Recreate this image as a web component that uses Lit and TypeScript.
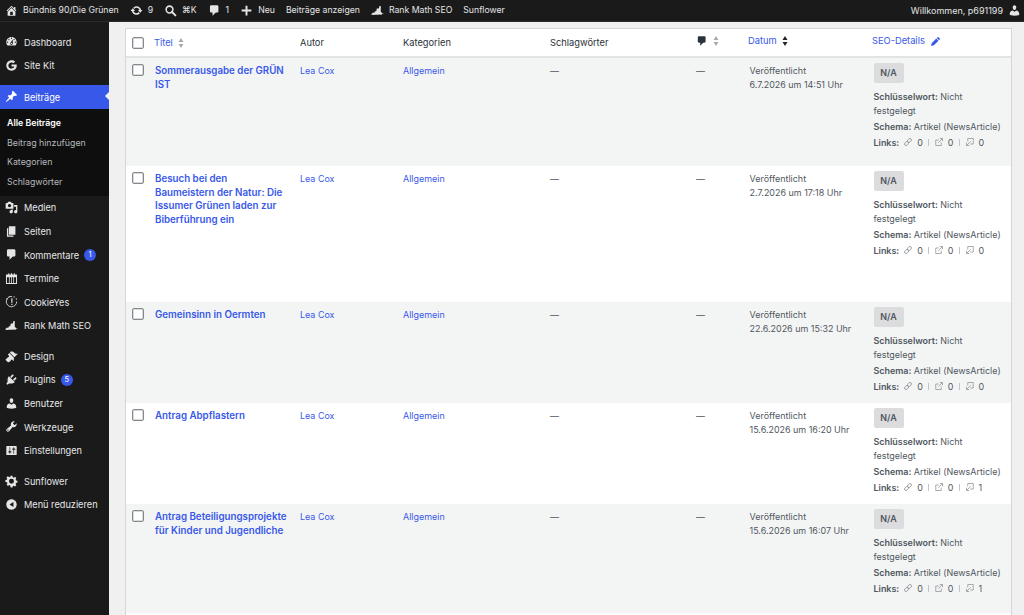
import { LitElement, html, css, svg } from "lit";
import { customElement } from "lit/decorators.js";

const ICONS: Record<string, unknown> = {
  home: svg`<path d="M16 8.5l1.53 1.53-1.06 1.06L10 4.62l-6.47 6.47-1.06-1.06L10 2.5l4 4v-2h2v4zm-6-2.46l6 5.99V18H4v-5.97zM12 17v-5H8v5h4z"/>`,
  update: svg`<path d="M10.2 3.28c3.53 0 6.43 2.61 6.92 6h2.08l-3.5 4-3.5-4h2.32c-.45-1.97-2.21-3.45-4.32-3.45-1.45 0-2.73.71-3.54 1.78L4.95 5.66C6.23 4.2 8.11 3.28 10.2 3.28zm-.4 13.44c-3.52 0-6.43-2.61-6.92-6H.8l3.5-4c1.17 1.33 2.33 2.67 3.5 4H5.48c.45 1.97 2.21 3.45 4.32 3.45 1.45 0 2.73-.71 3.54-1.78l1.71 1.95c-1.28 1.46-3.15 2.38-5.25 2.38z"/>`,
  search: svg`<circle cx="8.5" cy="8.5" r="5.2" fill="none" stroke="currentColor" stroke-width="2.4"/><path d="M12 12l5.500 5.500" stroke="currentColor" stroke-width="3" stroke-linecap="round"/>`,
  comment: svg`<path d="M5 2h9c1.1 0 2 .9 2 2v7c0 1.1-.9 2-2 2h-2l-5 5v-5H5c-1.1 0-2-.9-2-2V4c0-1.1.9-2 2-2z"/>`,
  plus: svg`<path d="M17.500 8.500v3h-6v6h-3v-6h-6v-3h6v-6h3v6z"/>`,
  rank: svg`<path d="M0 16l3-3 2 1 1-3h2l1-4h3l1-4h2v9l2 2h3l-3 1v1l-2 .500-2-.500-2 .500H6l-2 .500z"/>`,
  user: svg`<path d="M10 9.250c-2.270 0-2.730-3.440-2.730-3.440C7 4.020 7.820 2 9.970 2c2.160 0 2.980 2.020 2.710 3.810 0 0-.41 3.440-2.680 3.440zm0 2.570L12.720 10c2.390 0 4.520 2.330 4.520 4.530v2.490s-3.650 1.130-7.240 1.130c-3.650 0-7.240-1.130-7.240-1.130v-2.490c0-2.250 1.940-4.480 4.470-4.480z"/>`,
  dashboard: svg`<path d="M3.760 16h12.480c1.100-1.370 1.760-3.110 1.760-5 0-4.420-3.580-8-8-8s-8 3.580-8 8c0 1.890.66 3.630 1.760 5zM10 4c.55 0 1 .45 1 1s-.45 1-1 1-1-.45-1-1 .45-1 1-1zM6 6c.55 0 1 .45 1 1s-.45 1-1 1-1-.45-1-1 .45-1 1-1zm8 0c.55 0 1 .45 1 1s-.45 1-1 1-1-.45-1-1 .45-1 1-1zm-5.370 5.550L12 7v6c0 1.100-.9 2-2 2s-2-.9-2-2c0-.57.24-1.080.63-1.450zM4 10c.55 0 1 .45 1 1s-.45 1-1 1-1-.45-1-1 .45-1 1-1zm12 0c.55 0 1 .45 1 1s-.45 1-1 1-1-.45-1-1 .45-1 1-1zm-5 3c0-.55-.45-1-1-1s-1 .45-1 1 .45 1 1 1 1-.45 1-1z"/>`,
  google: svg`<path d="M18 8.400h-8v3.300h4.500c-.5 1.900-2.300 3.100-4.500 3.100-2.700 0-4.900-2.100-4.900-4.800S7.300 5.200 10 5.200c1.200 0 2.300.4 3.100 1.200l2.500-2.500C14.100 2.700 12.200 2 10 2 5.600 2 2 5.600 2 10s3.600 8 8 8c4.800 0 8.100-3.300 8.100-8 0-.6 0-1.100-.1-1.600z"/>`,
  pin: svg`<path d="M10.440 3.020l1.820-1.820 6.360 6.350-1.830 1.820c-1.050-.68-2.480-.57-3.410.36l-.75.75c-.92.93-1.040 2.350-.35 3.410l-1.830 1.820-2.410-2.410-2.800 2.790c-.42.42-3.380 2.710-3.800 2.290s1.860-3.390 2.280-3.810l2.790-2.790L4.100 9.360l1.830-1.820c1.050.69 2.480.57 3.400-.36l.75-.75c.93-.92 1.050-2.350.36-3.410z"/>`,
  media: svg`<path d="M13 11V4c0-.55-.45-1-1-1h-1.670L9 1H5L3.670 3H2c-.55 0-1 .45-1 1v7c0 .55.45 1 1 1h10c.55 0 1-.45 1-1zM7 4.500c1.380 0 2.500 1.120 2.500 2.500S8.380 9.500 7 9.500 4.500 8.380 4.500 7 5.620 4.500 7 4.500zM14 6h5v10.500c0 1.380-1.120 2.500-2.500 2.500S14 17.880 14 16.500s1.120-2.500 2.500-2.500c.17 0 .34.02.5.05V9h-3V6zm-4 8.050V13h2v3.500c0 1.380-1.120 2.500-2.500 2.500S7 17.880 7 16.500 8.120 14 9.500 14c.17 0 .34.02.5.05z"/>`,
  page: svg`<path d="M6 15V2h10v13H6zm-1 1h8v2H3V5h2v11z"/>`,
  calendar: svg`<path fill-rule="evenodd" d="M1.500 4H5V2h1.500v2H9V2h2v2h2.500V2H15v2h3.500v14.500h-17zM3 8v9h3V8zm4.200 0v9h2.200V8zm3.400 0v9h2.200V8zM14 8v9h3V8z"/>`,
  cookie: svg`<path d="M11 2.200A8 8 0 1 0 18 10" fill="none" stroke="currentColor" stroke-width="1.300"/><path d="M5.500 11l1.500-.5M9.700 5h1.800v7H9.700zM9.700 13.500h1.800v1.800H9.700z"/><circle cx="14" cy="3" r="1"/><circle cx="17.500" cy="6" r="1"/><path d="M2 5l2 2M6 1.500l1 2" stroke="currentColor"/>`,
  design: svg`<path d="M14.480 11.060L7.410 3.990l1.500-1.500c.5-.56 2.300-.47 3.510.32 1.210.8 1.430 1.280 2.910 2.100 1.180.64 2.450 1.260 4.450.85zm-.71.71L6.700 4.700 4.930 6.470c-.39.39-.39 1.020 0 1.410l1.060 1.060c.39.39.39 1.030 0 1.420-.6.6-1.430 1.110-2.210 1.690-.35.26-.7.53-1.010.84C1.430 13.230.4 14.930 1.400 15.940l2.660 2.660c1 1 2.710-.03 3.060-.38.32-.32.58-.66.84-1.010.58-.78 1.090-1.610 1.690-2.210.39-.39 1.030-.39 1.420 0l1.060 1.060c.39.39 1.020.39 1.410 0z"/>`,
  plugin: svg`<path d="M13.110 4.360L9.870 7.600 8 5.730l3.240-3.240c.35-.34 1.050-.2 1.560.32.52.51.66 1.210.31 1.550zm-8 1.770l.91-1.120 9.010 9.010-1.190.84c-.71.71-2.630 1.160-3.820 1.160H6.140L4.900 17.260c-.59.59-1.540.59-2.120 0-.59-.58-.59-1.530 0-2.120l1.240-1.240v-3.880c0-1.130.4-3.190 1.090-3.890zm7.260 3.970l3.240-3.240c.34-.35 1.040-.21 1.550.31.52.51.66 1.210.31 1.550l-3.240 3.250z"/>`,
  tools: svg`<path d="M16.680 9.770c-1.340 1.340-3.300 1.670-4.950.99l-5.410 6.520c-.99.99-2.590.99-3.580 0s-.99-2.590 0-3.570l6.520-5.420c-.68-1.650-.35-3.610.99-4.950 1.280-1.280 3.120-1.620 4.720-1.060l-2.890 2.890 2.820 2.820 2.860-2.870c.53 1.580.18 3.390-1.080 4.650zM3.810 16.210c.4.39 1.040.39 1.430 0 .4-.4.4-1.040 0-1.430-.39-.4-1.030-.4-1.430 0-.39.39-.39 1.030 0 1.430z"/>`,
  settings: svg`<path d="M18 16V4c0-.55-.45-1-1-1H3c-.55 0-1 .45-1 1v12c0 .55.45 1 1 1h14c.55 0 1-.45 1-1zM8 11h1c.55 0 1 .45 1 1s-.45 1-1 1H8v1.500c0 .28-.22.5-.5.5s-.5-.22-.5-.5V13H6c-.55 0-1-.45-1-1s.45-1 1-1h1V5.500c0-.28.22-.5.5-.5s.5.22.5.5V11zm5-2h-1c-.55 0-1-.45-1-1s.45-1 1-1h1V5.500c0-.28.22-.5.5-.5s.5.22.5.5V7h1c.55 0 1 .45 1 1s-.45 1-1 1h-1v5.500c0 .28-.22.5-.5.5s-.5-.22-.5-.5V9z"/>`,
  gear: svg`<path fill-rule="evenodd" d="M8.500 1h3l.5 2.300 1.700.7 2-1.300 2.100 2.100-1.300 2 .7 1.700 2.300.5v3l-2.300.5-.7 1.700 1.300 2-2.100 2.100-2-1.300-1.700.7-.5 2.300h-3L8 16.700 6.300 16l-2 1.300-2.100-2.100 1.300-2-.7-1.700L.2 11V8l2.300-.5.7-1.700-1.300-2 2.100-2.100 2 1.300L8 3.300zM10 6a3.800 3.800 0 1 0 0 8 3.800 3.800 0 0 0 0-8z" transform="translate(.4 .2) scale(.96)"/>`,
  collapse: svg`<path d="M18 10c0-4.420-3.580-8-8-8s-8 3.580-8 8 3.580 8 8 8 8-3.580 8-8zm-5-4v8l-6-4z"/>`,
  pencil: svg`<path d="M14.500 1.500l4 4-2 2-4-4zM11.500 4.500l4 4-8.500 8.500-5 1 1-5z"/>`,
  link: svg`<g fill="none" stroke="currentColor" stroke-width="1.500"><rect x="10" y="2.500" width="6" height="9" rx="3" transform="rotate(45 13 7)"/><rect x="4" y="8.500" width="6" height="9" rx="3" transform="rotate(45 7 13)"/></g>`,
  external: svg`<g fill="none" stroke="currentColor" stroke-width="1.500"><path d="M14.500 11v6h-11V6h6"/><path d="M8.500 11.500L16.500 3.500M11.500 3h5.500v5.500"/></g>`,
  inbound: svg`<g fill="none" stroke="currentColor" stroke-width="1.500"><path d="M5.500 9V3h11v11h-6"/><path d="M11.500 8.500L3.500 16.500M8.500 17H3v-5.500"/></g>`,
};

const icon = (name: string, cls = "") =>
  html`<svg class="icon ${cls}" viewBox="0 0 20 20" fill="currentColor">${ICONS[name]}</svg>`;

const sortArrows = (cls = "") =>
  html`<svg class="sort ${cls}" viewBox="0 0 8 14"><path d="M4 0l3.500 5.500h-7z"/><path d="M4 14l3.500-5.500h-7z"/></svg>`;

interface MenuItem {
  label: string;
  icon: string;
  badge?: string;
  current?: boolean;
  gapBefore?: boolean;
}

const MENU_TOP: MenuItem[] = [
  { label: "Dashboard", icon: "dashboard" },
  { label: "Site Kit", icon: "google" },
];
const MENU_REST: MenuItem[] = [
  { label: "Medien", icon: "media" },
  { label: "Seiten", icon: "page" },
  { label: "Kommentare", icon: "comment", badge: "1" },
  { label: "Termine", icon: "calendar" },
  { label: "CookieYes", icon: "cookie" },
  { label: "Rank Math SEO", icon: "rank" },
  { label: "Design", icon: "design", gapBefore: true },
  { label: "Plugins", icon: "plugin", badge: "5" },
  { label: "Benutzer", icon: "user" },
  { label: "Werkzeuge", icon: "tools" },
  { label: "Einstellungen", icon: "settings" },
  { label: "Sunflower", icon: "gear", gapBefore: true },
  { label: "Menü reduzieren", icon: "collapse" },
];

const POSTS = [
  { title: "Sommerausgabe der GRÜN IST", date: "6.7.2026 um 14:51 Uhr", inbound: 0, height: 108 },
  { title: "Besuch bei den Baumeistern der Natur: Die Issumer Grünen laden zur Biberführung ein", date: "2.7.2026 um 17:18 Uhr", inbound: 0, height: 136 },
  { title: "Gemeinsinn in Oermten", date: "22.6.2026 um 15:32 Uhr", inbound: 0, height: 101 },
  { title: "Antrag Abpflastern", date: "15.6.2026 um 16:20 Uhr", inbound: 1, height: 101 },
  { title: "Antrag Beteiligungsprojekte für Kinder und Jugendliche", date: "15.6.2026 um 16:07 Uhr", inbound: 1, height: 109 },
];

@customElement("app-root")
export class AppRoot extends LitElement {
  static styles = css`
    :host {
      display: block;
      height: 615px;
      overflow: hidden;
      background: #f0f0f1;
      font-family: Inter, "Liberation Sans", sans-serif;
      font-size: 8.95px;
      line-height: 13.5px;
      color: #50575e;
    }
    .icon {
      display: block;
      flex: none;
    }
    .topbar {
      height: 22px;
      background: #1a1a1a;
      color: #e4e5e6;
      display: flex;
      align-items: center;
      padding: 0 3px 0 5px;
      font-size: 8.7px;
      border-bottom: 1px solid #2a2a2a;
      box-sizing: border-box;
    }
    .topbar .icon {
      width: 13px;
      height: 13px;
    }
    .bar-item {
      display: flex;
      align-items: center;
      gap: 5px;
      margin-right: 11px;
      white-space: nowrap;
    }
    .bar-end {
      margin: 0 0 0 auto;
      font-size: 9px;
    }
    .side {
      width: 109px;
      flex: none;
      background: #1a1a1a;
      color: #e6e7e8;
      padding-top: 8px;
      font-size: 9.2px;
      box-sizing: border-box;
    }
    .page {
      display: flex;
      height: 593px;
    }
    .item {
      height: 23.6px;
      display: flex;
      align-items: center;
      gap: 6px;
      padding-left: 5px;
      position: relative;
    }
    .item > span:not(.badge) {
      padding-top: 1px;
    }
    .item .icon {
      width: 13px;
      height: 13px;
      color: #e4e5e6;
    }
    .item.gap {
      margin-top: 7px;
    }
    .item.current {
      margin-top: 8px;
      background: #3858e9;
      color: #fff;
    }
    .item.current .icon {
      color: #fff;
    }
    .item.current::after {
      content: "";
      position: absolute;
      right: 0;
      top: 7px;
      border: 4.5px solid transparent;
      border-right-color: #f0f0f1;
      border-left-width: 0;
    }
    .badge {
      width: 12px;
      height: 12px;
      border-radius: 50%;
      background: #3858e9;
      color: #fff;
      font-size: 7.5px;
      line-height: 12px;
      text-align: center;
      margin-left: -1px;
    }
    .sub {
      background: #0e0e0e;
      padding: 4.5px 0 4.5px 7px;
      color: #b4b8bc;
      font-size: 8.8px;
    }
    .sub div {
      height: 19.5px;
      display: flex;
      align-items: center;
    }
    .sub .active {
      color: #fff;
      font-weight: 600;
    }
    .main {
      flex: 1;
      padding: 6px 12px 0 16px;
      min-width: 0;
    }
    .table {
      background: #fff;
      border: 1px solid #d5d6d8;
      border-bottom: 0;
      min-height: 600px;
    }
    .row {
      display: grid;
      grid-template-columns: 28px 146px 103px 147px 146px 52px 124px 1fr;
      box-sizing: border-box;
    }
    .row.head {
      height: 29px;
      align-items: center;
      color: #2c3338;
      font-size: 9.3px;
      border-bottom: 2px solid #e2e3e4;
    }
    .row.head > * {
      display: flex;
      align-items: center;
      gap: 5px;
    }
    .row.head .raised {
      padding-bottom: 3px;
    }
    .row.head .sorted {
      color: #3858e9;
    }
    .row.body {
      padding-top: 5px;
    }
    .row.body:nth-child(even) {
      background: #f3f5f5;
    }
    .check {
      display: block;
      width: 10px;
      height: 10px;
      border: 1px solid #85888c;
      border-radius: 2px;
      background: #fff;
      box-shadow: inset 0 0 0 1px #d8d9db;
      margin-left: 6px;
    }
    .row.body .check {
      margin-top: 1px;
    }
    .sort {
      width: 6px;
      height: 10px;
      fill: #a7aaad;
    }
    .sort.desc {
      fill: #1d2327;
    }
    .cicon {
      width: 12px;
      height: 12px;
      color: #2c3338;
    }
    .pencil {
      width: 11px;
      height: 11px;
      color: #3858e9;
    }
    .title {
      color: #3858e9;
      font-weight: 600;
      font-size: 9.75px;
      padding: 1px 12px 0 1px;
    }
    .link {
      color: #3858e9;
      padding-top: 1px;
    }
    .plain {
      padding-top: 1px;
    }
    .date {
      padding: 1px 0 0 1.5px;
    }
    .seo {
      padding-left: 1.5px;
    }
    .score {
      width: 30px;
      height: 20px;
      border-radius: 2px;
      background: #dcdcde;
      font-weight: 600;
      display: flex;
      align-items: center;
      justify-content: center;
      margin-bottom: 7px;
    }
    .seo p {
      margin: 0 0 2.5px;
      max-width: 130px;
    }
    .seo .wide {
      max-width: none;
      white-space: nowrap;
    }
    .seo b {
      font-weight: 600;
    }
    .links {
      display: flex;
      align-items: center;
      gap: 4px;
    }
    .links .icon {
      width: 10px;
      height: 10px;
      color: #8c8f94;
    }
    .sep {
      width: 1px;
      height: 7px;
      background: #c3c4c7;
      margin: 0 1px;
    }
  `;

  private menuItem(m: MenuItem) {
    return html`<div class="item ${m.gapBefore ? "gap" : ""} ${m.current ? "current" : ""}">
      ${icon(m.icon)}<span>${m.label}</span>
      ${m.badge ? html`<span class="badge">${m.badge}</span>` : ""}
    </div>`;
  }

  render() {
    return html`
      <div class="topbar">
        <div class="bar-item">${icon("home")}<span>Bündnis 90/Die Grünen</span></div>
        <div class="bar-item">${icon("update")}<span>9</span></div>
        <div class="bar-item">${icon("search")}<span>⌘K</span></div>
        <div class="bar-item">${icon("comment")}<span>1</span></div>
        <div class="bar-item">${icon("plus")}<span>Neu</span></div>
        <div class="bar-item"><span>Beiträge anzeigen</span></div>
        <div class="bar-item">${icon("rank")}<span>Rank Math SEO</span></div>
        <div class="bar-item"><span>Sunflower</span></div>
        <div class="bar-item bar-end"><span>Willkommen, p691199</span>${icon("user")}</div>
      </div>
      <div class="page">
        <nav class="side">
          ${MENU_TOP.map((m) => this.menuItem(m))}
          ${this.menuItem({ label: "Beiträge", icon: "pin", current: true })}
          <div class="sub">
            <div class="active">Alle Beiträge</div>
            <div>Beitrag hinzufügen</div>
            <div>Kategorien</div>
            <div>Schlagwörter</div>
          </div>
          ${MENU_REST.map((m) => this.menuItem(m))}
        </nav>
        <main class="main">
          <div class="table">
            <div class="row head">
              <div><span class="check"></span></div>
              <div class="sorted"><span>Titel</span>${sortArrows()}</div>
              <div>Autor</div>
              <div>Kategorien</div>
              <div>Schlagwörter</div>
              <div class="raised">${icon("comment", "cicon")}${sortArrows()}</div>
              <div class="sorted raised"><span>Datum</span>${sortArrows("desc")}</div>
              <div class="sorted raised"><span>SEO-Details</span>${icon("pencil", "pencil")}</div>
            </div>
            ${POSTS.map(
              (p) => html`
                <div class="row body" style="height:${p.height}px">
                  <div><span class="check"></span></div>
                  <div class="title">${p.title}</div>
                  <div class="link">Lea Cox</div>
                  <div class="link">Allgemein</div>
                  <div class="plain">—</div>
                  <div class="plain">—</div>
                  <div class="date">Veröffentlicht<br />${p.date}</div>
                  <div class="seo">
                    <div class="score">N/A</div>
                    <p><b>Schlüsselwort:</b> Nicht festgelegt</p>
                    <p class="wide"><b>Schema:</b> Artikel (NewsArticle)</p>
                    <div class="links">
                      <b>Links:</b> ${icon("link")} <span>0</span><span class="sep"></span>
                      ${icon("external")} <span>0</span><span class="sep"></span>
                      ${icon("inbound")} <span>${p.inbound}</span>
                    </div>
                  </div>
                </div>
              `
            )}
          </div>
        </main>
      </div>
    `;
  }
}
